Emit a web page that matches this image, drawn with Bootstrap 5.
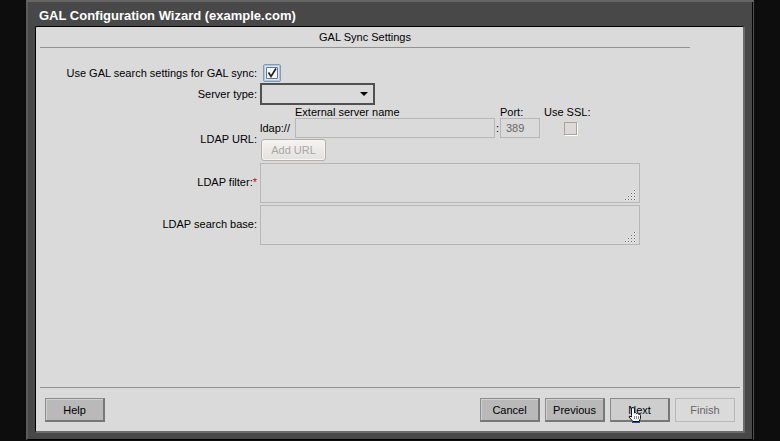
<!DOCTYPE html>
<html lang="en">
<head>
<meta charset="utf-8">
<meta name="viewport" content="width=device-width, initial-scale=1">
<title>GAL Configuration Wizard</title>
<link href="https://cdn.jsdelivr.net/npm/bootstrap@5.3.0/dist/css/bootstrap.min.css" rel="stylesheet">
<style>
body{background:#0d0d0d;font-family:"Liberation Sans",Arial,sans-serif;font-size:11px;line-height:14px;color:#000}
.wizard{margin:0 26px 1px;background:#484848;border:solid;border-width:2px 1px 1px 2px;border-color:#666 #555 #000 #5c5c5c;box-shadow:inset -1px 0 #000;padding:0 8px 6px 7px}
.wizard-title{font-size:13px;font-weight:700;line-height:16px;color:#fff;padding:6px 4px 2px}
.pane{background:#dadada;border:solid;border-width:1px 2px 2px 1px;border-color:#000 #6c6c6c #6c6c6c #000;border-radius:2px;padding:3px 3px 9px 4px}
.step-title{font-size:11px;line-height:14px;text-align:center;padding-bottom:3px;border-bottom:1px solid #929292;margin:0 50px 15px 0}
.form-grid{display:grid;grid-template-columns:217px minmax(0,380px);column-gap:3px;align-items:center}
.form-grid>label,.form-grid>.lab{text-align:right}
.lab{padding-top:12px}
.req{color:#c00000}
.tick{appearance:none;display:block;margin:0;width:13px;height:13px;border:1px solid #aaa49d;box-shadow:1px 1px #fff;background:transparent}
.tick:checked{width:18px;height:18px;margin:1px 3px;border:1px solid #7f9abb;border-radius:2px;box-shadow:inset 0 0 0 1px #b4c6dc;background:#dce6f1 url("data:image/svg+xml,%3Csvg xmlns='http://www.w3.org/2000/svg' viewBox='0 0 16 16'%3E%3Cpath d='M2.500 2.500h11v11h-11z' fill='%23f4f7fa' stroke='%2366788e'/%3E%3Cpath d='M4.500 7.500l2.500 4 5-8' fill='none' stroke='%23222' stroke-width='1.700'/%3E%3C/svg%3E") center/16px}
.type-select{display:block;width:115px;height:22px;border:2px solid #505050;border-radius:0;appearance:none;font-size:11px;background:transparent url("data:image/svg+xml,%3Csvg xmlns='http://www.w3.org/2000/svg' width='8' height='4'%3E%3Cpath d='M0 0h8L4 4z'/%3E%3C/svg%3E") no-repeat right 5px center}
.url-grid{display:grid;grid-template-columns:35px 200px 5px 40px 60px;grid-template-rows:13px 20px;align-items:center}
.entry{display:block;width:100%;border:1px solid #b7b7b7;border-radius:0;background:transparent;color:#666;font-size:11px;line-height:14px}
input.entry{height:20px;padding:0 5px}
textarea.entry{height:40px;resize:none}
.area{margin-top:2px}
.grip{position:absolute;right:4px;bottom:2px}
.add-btn{display:block;width:65px;height:22px;margin:1px 0 0 1px;padding:0;font-size:11px;line-height:14px;border:1px solid #b3aea9;border-radius:3px;box-shadow:inset 0 0 0 1px #f6f5f4;background:linear-gradient(#f5f4f3,#e3e1df)}
.add-btn:disabled{color:#aaa6a2;border-color:#b3aea9;opacity:1}
.foot{border-top:1px solid #929292;padding:10px 5px 0}
.btn-row{gap:5px}
.wiz-btn{width:60px;height:24px;padding:0;font-size:11px;line-height:14px;border-radius:0;color:#000;background:#b9b9b9;border:solid;border-width:1px 2px 2px 1px;border-color:#8c8c8c #777 #777 #8c8c8c;box-shadow:inset 1px 1px #d0d0d0}
.wiz-btn.over{background:#cecece;box-shadow:none}
.wiz-btn:disabled{background:transparent;color:#666;border:1px solid #b9b9b9;opacity:1;box-shadow:none}
.pointer{position:absolute;left:17px;top:8px;pointer-events:none}
</style>
<script src="https://cdn.jsdelivr.net/npm/bootstrap@5.3.0/dist/js/bootstrap.bundle.min.js"></script>
</head>
<body class="d-flex flex-column min-vh-100">
<main class="wizard flex-grow-1 d-flex flex-column">
  <h1 class="wizard-title mb-0">GAL Configuration Wizard (example.com)</h1>
  <form class="pane flex-grow-1 d-flex flex-column">
    <h2 class="step-title">GAL Sync Settings</h2>
    <div class="form-grid">
      <label for="sync">Use GAL search settings for GAL sync:</label>
      <input class="tick" id="sync" type="checkbox" checked>
      <label for="type">Server type:</label>
      <select class="type-select" id="type"><option value=""></option></select>
      <div class="lab">LDAP URL:</div>
      <div>
        <div class="url-grid">
          <span></span><label for="server">External server name</label><span></span><label for="port">Port:</label><label class="ps-1" for="ssl">Use SSL:</label>
          <span>ldap://</span><input class="entry" id="server" type="text" disabled><span class="text-center">:</span><input class="entry" id="port" type="text" value="389" disabled><input class="tick mx-auto" id="ssl" type="checkbox" disabled>
        </div>
        <button class="btn add-btn" type="button" disabled>Add URL</button>
      </div>
      <label for="filter">LDAP filter:<span class="req">*</span></label>
      <div class="position-relative area">
        <textarea class="entry" id="filter" disabled></textarea>
        <svg class="grip" width="12" height="12"><path d="M10 1h1v1h-1zM7 4h1v1H7zM10 4h1v1h-1zM4 7h1v1H4zM7 7h1v1H7zM10 7h1v1h-1zM1 10h1v1H1zM4 10h1v1H4zM7 10h1v1H7zM10 10h1v1h-1z" fill="#fff" stroke="#f4f4f4"/><path d="M10 1h1v1h-1zM7 4h1v1H7zM10 4h1v1h-1zM4 7h1v1H4zM7 7h1v1H7zM10 7h1v1h-1zM1 10h1v1H1zM4 10h1v1H4zM7 10h1v1H7zM10 10h1v1h-1z" fill="#666"/></svg>
      </div>
      <label for="base">LDAP search base:</label>
      <div class="position-relative area">
        <textarea class="entry" id="base" disabled></textarea>
        <svg class="grip" width="12" height="12"><path d="M10 1h1v1h-1zM7 4h1v1H7zM10 4h1v1h-1zM4 7h1v1H4zM7 7h1v1H7zM10 7h1v1h-1zM1 10h1v1H1zM4 10h1v1H4zM7 10h1v1H7zM10 10h1v1h-1z" fill="#fff" stroke="#f4f4f4"/><path d="M10 1h1v1h-1zM7 4h1v1H7zM10 4h1v1h-1zM4 7h1v1H4zM7 7h1v1H7zM10 7h1v1h-1zM1 10h1v1H1zM4 10h1v1H4zM7 10h1v1H7zM10 10h1v1h-1z" fill="#666"/></svg>
      </div>
    </div>
    <div class="foot mt-auto d-flex">
      <button class="btn wiz-btn me-auto" type="button">Help</button>
      <div class="d-flex btn-row">
        <button class="btn wiz-btn" type="button">Cancel</button>
        <button class="btn wiz-btn" type="button">Previous</button>
        <button class="btn wiz-btn over position-relative" type="button">Next<svg class="pointer" width="16" height="18" viewBox="0 0 16 18"><path d="M4 14h8v2H4z" fill="#1746b8"/><path d="M3.500 8.500V2q0-1.500 1.500-1.500T6.500 2v4q1-1 2 .5 1.200-.8 2 .6 2-.6 2 1.400v3l-1.500 3h-6L1 10q0-2 2.500 0z" fill="#fff" stroke="#111"/><path d="M6.500 9v3m2-3v3m2-3v3" stroke="#555" stroke-width=".7"/></svg></button>
        <button class="btn wiz-btn" type="button" disabled>Finish</button>
      </div>
    </div>
  </form>
</main>
</body>
</html>
